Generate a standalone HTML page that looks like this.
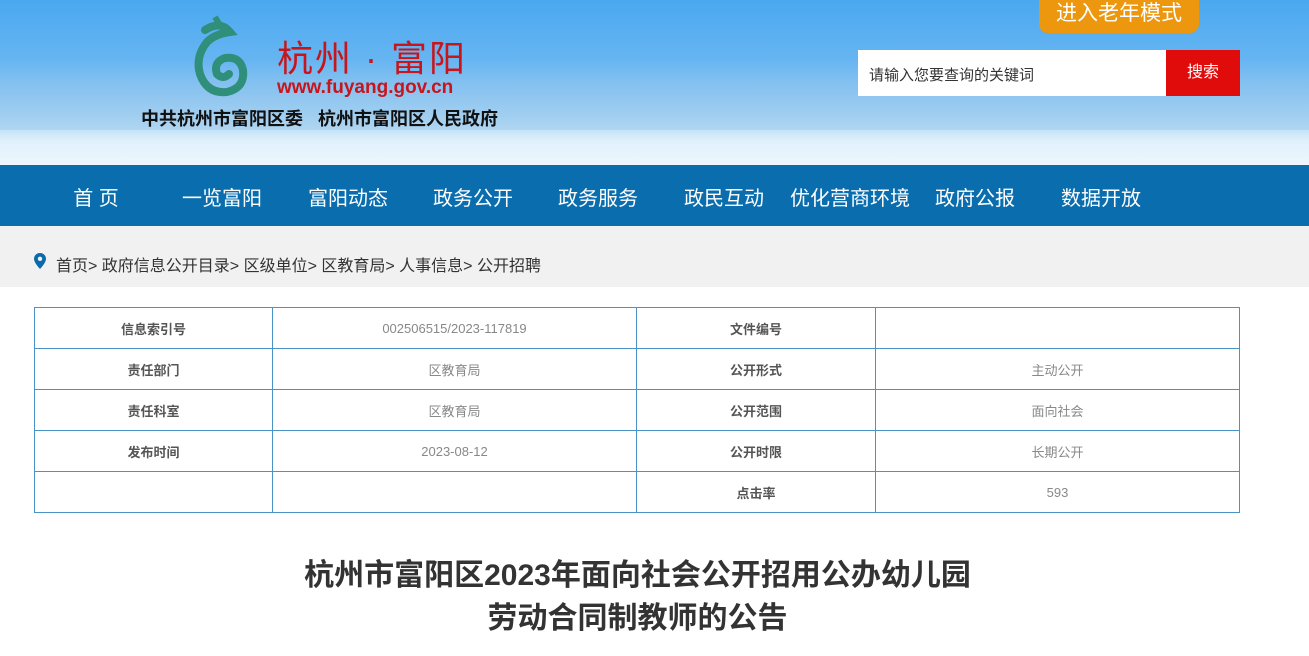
<!DOCTYPE html>
<html><head><meta charset="utf-8"><style>
*{margin:0;padding:0;box-sizing:border-box}
body{width:1309px;height:656px;overflow:hidden;background:#fff;font-family:"Liberation Sans","Noto Sans CJK SC",sans-serif;position:relative}
.hd{position:absolute;left:0;top:0;width:1309px;height:165px;background:linear-gradient(180deg,#4aa8f0 0%,#6db8f2 45%,#9fd0f3 70%,#dff0fb 85%,#eef7fd 100%)}
.city{position:absolute;left:0;top:60px;width:1309px;height:70px;background:linear-gradient(180deg,rgba(150,200,240,0) 0%,rgba(140,195,238,.7) 40%,rgba(170,210,240,.8) 100%)}
.nav{position:absolute;left:0;top:165px;width:1309px;height:61px;background:#0a6eae}
.nav span{position:absolute;top:17px;color:#fff;font-size:20px;transform:translateX(-50%);white-space:nowrap}
.bc{position:absolute;left:0;top:226px;width:1309px;height:61px;background:#f1f1f1;font-size:16px;color:#333}
table{position:absolute;left:34px;top:307px;border-collapse:collapse;width:1206px}
td{border:1px solid #4a93c6;height:41px;text-align:center;font-size:13px;color:#888}
td.k{color:#555;font-weight:bold}
.t{position:absolute;left:0;width:1275px;text-align:center;font-size:30px;font-weight:bold;color:#333}
</style></head><body>
<div class="hd"><div class="city"></div>
<svg style="position:absolute;left:185px;top:12px" width="80" height="95" viewBox="0 0 80 95"><path d="M20 18 Q35 8 45 20 Q30 22 22 30 Q10 45 15 62 Q22 82 42 80 Q60 76 58 58 Q55 44 40 46 Q28 50 32 62 Q38 68 44 62" fill="none" stroke="#2f8f7a" stroke-width="8" stroke-linecap="round"/><path d="M30 5 L36 15" stroke="#2f8f7a" stroke-width="6"/></svg>
<div style="position:absolute;left:277px;top:30px;font-size:36px;color:#c8151c;letter-spacing:2px">杭州 · 富阳</div>
<div style="position:absolute;left:277px;top:77px;font-size:19px;color:#c8151c;font-weight:bold">www.fuyang.gov.cn</div>
<div style="position:absolute;left:141px;top:105px;font-size:18px;color:#111;font-weight:bold;white-space:nowrap">中共杭州市富阳区委&nbsp;&nbsp;&nbsp;杭州市富阳区人民政府</div>
<div style="position:absolute;left:1039px;top:-4px;width:160px;height:37px;background:#ec970e;border-radius:0 0 9px 9px;color:#fff;font-size:21px;text-align:center;line-height:36px">进入老年模式</div>
<div style="position:absolute;left:858px;top:50px;width:309px;height:46px;background:#fff;font-size:15px;color:#333;padding:14px 0 0 11px">请输入您要查询的关键词</div>
<div style="position:absolute;left:1166px;top:50px;width:74px;height:46px;background:#e00b0b;color:#fff;font-size:16px;text-align:center;line-height:46px">搜索</div>
</div>
<div class="nav">
<span style="left:96px">首 页</span><span style="left:222px">一览富阳</span><span style="left:348px">富阳动态</span><span style="left:473px">政务公开</span><span style="left:598px">政务服务</span><span style="left:724px">政民互动</span><span style="left:850px">优化营商环境</span><span style="left:975px">政府公报</span><span style="left:1101px">数据开放</span>
</div>
<div class="bc">
<svg style="position:absolute;left:34px;top:27px" width="12" height="16" viewBox="0 0 12 16"><path d="M6 0C2.7 0 0 2.6 0 5.8 0 10 6 16 6 16s6-6 6-10.2C12 2.6 9.3 0 6 0z" fill="#0b6aab"/><circle cx="6" cy="5.8" r="2.2" fill="#f1f1f1"/></svg>
<div style="position:absolute;left:56px;top:26px;white-space:nowrap">首页&gt; 政府信息公开目录&gt; 区级单位&gt; 区教育局&gt; 人事信息&gt; 公开招聘</div>
</div>
<table>
<tr><td class="k" style="width:238px">信息索引号</td><td style="width:364px">002506515/2023-117819</td><td class="k" style="width:239px">文件编号</td><td></td></tr>
<tr><td class="k">责任部门</td><td>区教育局</td><td class="k">公开形式</td><td>主动公开</td></tr>
<tr><td class="k">责任科室</td><td>区教育局</td><td class="k">公开范围</td><td>面向社会</td></tr>
<tr><td class="k">发布时间</td><td>2023-08-12</td><td class="k">公开时限</td><td>长期公开</td></tr>
<tr><td></td><td></td><td class="k">点击率</td><td>593</td></tr>
</table>
<div class="t" style="top:550px">杭州市富阳区2023年面向社会公开招用公办幼儿园</div>
<div class="t" style="top:593px">劳动合同制教师的公告</div>
</body></html>
